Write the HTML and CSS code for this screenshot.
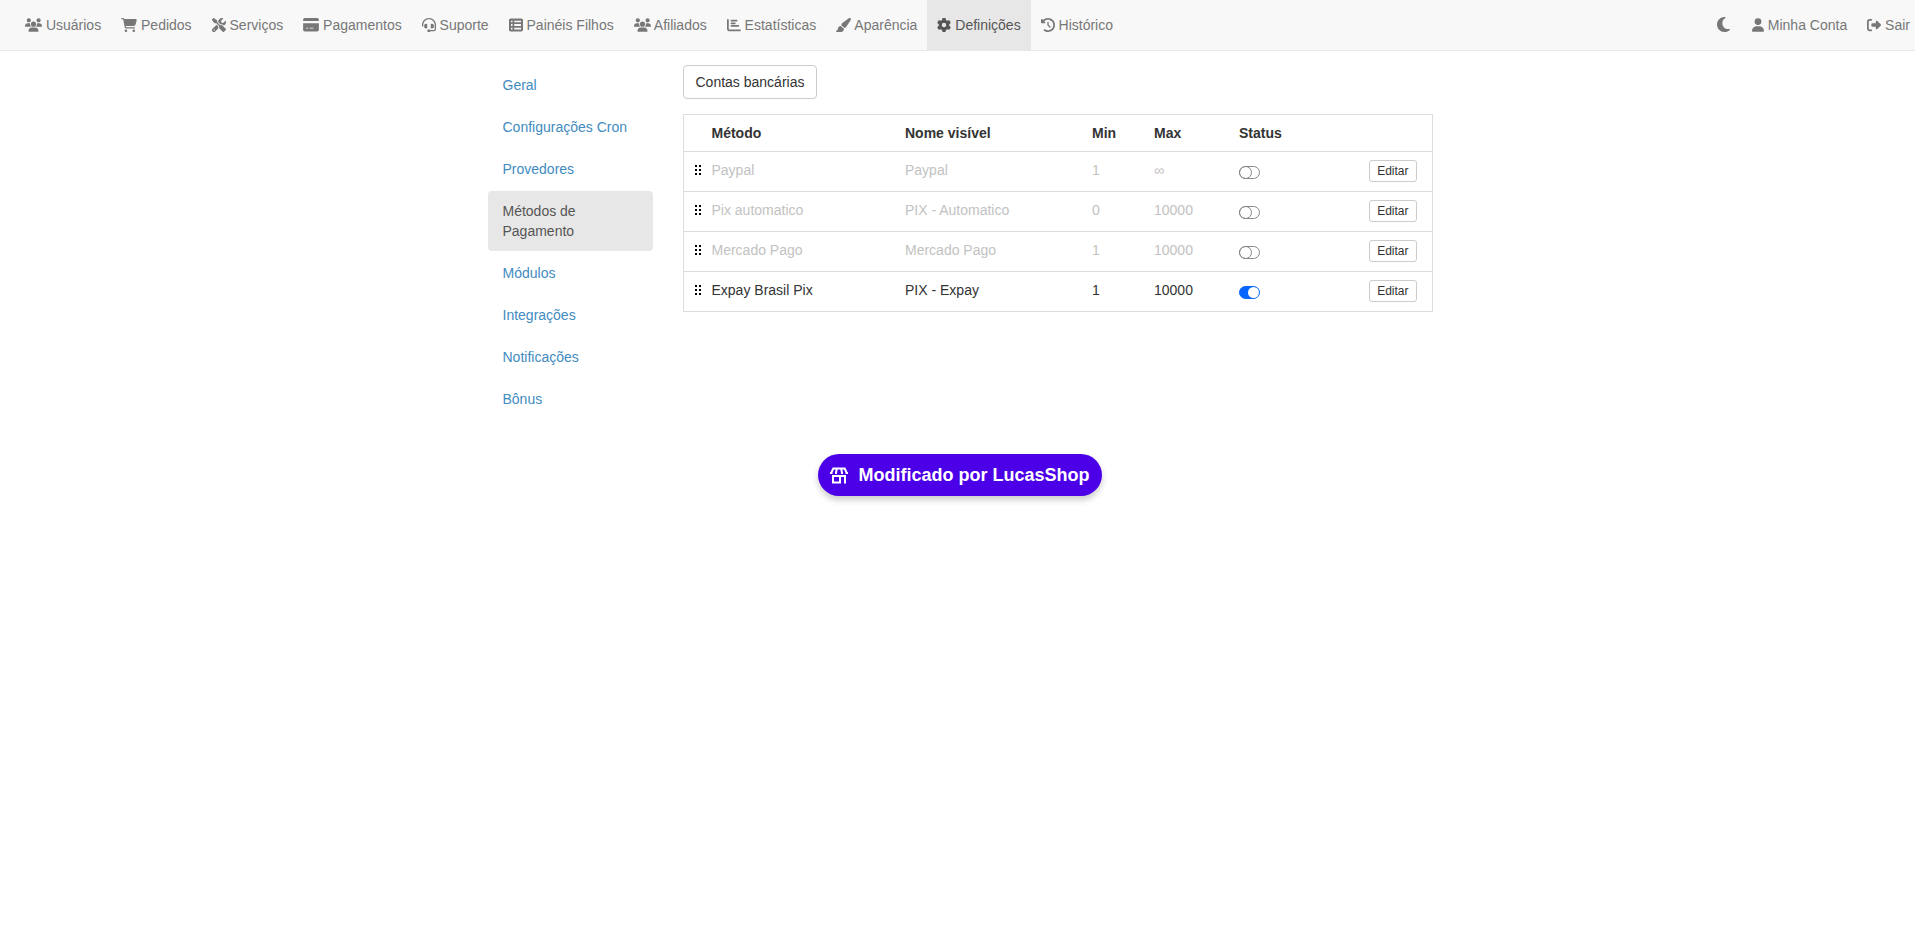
FILE: index.html
```html
<!DOCTYPE html>
<html lang="pt-br">
<head>
    <meta charset="UTF-8">
    <meta name="viewport" content="width=device-width, initial-scale=1.0">
    <title>Métodos de Pagamento</title>
    <link rel="stylesheet" href="styles.css">
</head>
<body>
    <!-- Ícones usados mais de uma vez -->
    <svg class="sprite" aria-hidden="true">
        <symbol id="i-users" viewBox="0 0 640 512"><path d="M144 0a80 80 0 1 1 0 160A80 80 0 1 1 144 0zM512 0a80 80 0 1 1 0 160A80 80 0 1 1 512 0zM0 298.7C0 239.8 47.8 192 106.7 192h42.7c15.9 0 31 3.5 44.6 9.7c-1.3 7.2-1.9 14.7-1.9 22.3c0 38.2 16.8 72.5 43.3 96c-.2 0-.4 0-.7 0H21.3C9.6 320 0 310.4 0 298.7zM405.3 320c-.2 0-.4 0-.7 0c26.6-23.5 43.3-57.8 43.3-96c0-7.6-.7-15-1.9-22.3c13.6-6.3 28.7-9.7 44.6-9.7h42.7C592.2 192 640 239.8 640 298.7c0 11.8-9.6 21.3-21.3 21.3H405.3zM224 224a96 96 0 1 1 192 0 96 96 0 1 1 -192 0zM128 485.3C128 411.7 187.7 352 261.3 352H378.7C452.3 352 512 411.7 512 485.3c0 14.7-11.9 26.7-26.7 26.7H154.7c-14.7 0-26.7-11.9-26.7-26.7z"/></symbol>
        <symbol id="i-drag" viewBox="0 0 6 10"><path d="M0 0h2v2H0zM4 0h2v2H4zM0 4h2v2H0zM4 4h2v2H4zM0 8h2v2H0zM4 8h2v2H4z"/></symbol>
    </svg>

    <nav class="navbar">
        <ul class="nav">
            <li><a href="#"><svg class="icon icon-xl"><use href="#i-users"/></svg> Usuários</a></li>
            <li><a href="#"><svg class="icon icon-lg" viewBox="0 0 576 512"><path d="M0 24C0 10.7 10.7 0 24 0H69.5c22 0 41.5 12.8 50.6 32h411c26.3 0 45.5 25 38.6 50.4l-41 152.3c-8.5 31.4-37 53.3-69.5 53.3H170.7l5.4 28.5c2.2 11.3 12.1 19.5 23.6 19.5H488c13.3 0 24 10.7 24 24s-10.7 24-24 24H199.7c-34.6 0-64.3-24.6-70.7-58.5L77.4 54.5c-.7-3.8-4-6.5-7.9-6.5H24C10.7 48 0 37.3 0 24zM128 464a48 48 0 1 1 96 0 48 48 0 1 1 -96 0zm336-48a48 48 0 1 1 0 96 48 48 0 1 1 0-96z"/></svg> Pedidos</a></li>
            <li><a href="#"><svg class="icon" viewBox="0 0 512 512"><path d="M78.6 5C69.1-2.4 55.6-1.5 47 7L7 47c-8.5 8.5-9.4 22-2.1 31.6l80 104c4.5 5.9 11.6 9.4 19 9.4h54.1l109 109c-14.7 29-10 65.4 14.3 89.6l112 112c12.5 12.5 32.8 12.5 45.3 0l64-64c12.5-12.5 12.5-32.8 0-45.3l-112-112c-24.2-24.2-60.6-29-89.6-14.3l-109-109V104c0-7.5-3.5-14.5-9.4-19L78.6 5zM19.9 396.1C7.2 408.8 0 426.1 0 444.1C0 481.6 30.4 512 67.9 512c18 0 35.3-7.2 48-19.9L233.7 374.3c-7.8-20.9-9-43.6-3.6-65.1l-61.7-61.7L19.9 396.1zM512 144c0-10.5-1.1-20.7-3.2-30.5c-2.4-11.2-16.1-14.1-24.2-6l-63.9 63.9c-3 3-7.1 4.7-11.3 4.7H352c-8.8 0-16-7.2-16-16V102.6c0-4.2 1.7-8.3 4.7-11.3l63.9-63.9c8.1-8.1 5.2-21.8-6-24.2C388.7 1.1 378.5 0 368 0C288.5 0 224 64.5 224 144l0 .8 85.3 85.3c36-9.1 75.8 .5 104 28.7L429 274.5c49-23 83-72.8 83-130.5zM56 432a24 24 0 1 1 48 0 24 24 0 1 1 -48 0z"/></svg> Serviços</a></li>
            <li><a href="#"><svg class="icon icon-lg" viewBox="0 0 576 512"><path d="M64 0C28.700 0 0 28.700 0 64v50H576V64c0-35.300-28.700-64-64-64H64zM576 190H0V430c0 35.300 28.700 64 64 64H512c35.300 0 64-28.700 64-64V190zM112 352h64c8.800 0 16 7.200 16 16s-7.200 16-16 16H112c-8.800 0-16-7.200-16-16s7.200-16 16-16zm112 16c0-8.800 7.200-16 16-16H368c8.800 0 16 7.200 16 16s-7.200 16-16 16H240c-8.800 0-16-7.200-16-16z"/></svg> Pagamentos</a></li>
            <li><a href="#"><svg class="icon" viewBox="0 0 512 512"><path d="M256 48C141.1 48 48 141.1 48 256v40c0 13.3-10.7 24-24 24s-24-10.7-24-24V256C0 114.6 114.6 0 256 0S512 114.6 512 256V400.1c0 48.6-39.4 88-88.1 88L313.6 488c-8.3 14.3-23.8 24-41.6 24H240c-26.5 0-48-21.5-48-48s21.5-48 48-48h32c17.8 0 33.3 9.7 41.6 24l110.4 .1c22.1 0 40-17.9 40-40V256c0-114.9-93.1-208-208-208zM144 208h16c17.7 0 32 14.3 32 32V352c0 17.7-14.3 32-32 32H144c-35.3 0-64-28.7-64-64V272c0-35.3 28.7-64 64-64zm224 0c35.3 0 64 28.7 64 64v48c0 35.3-28.7 64-64 64H352c-17.7 0-32-14.3-32-32V240c0-17.7 14.3-32 32-32h16z"/></svg> Suporte</a></li>
            <li><a href="#"><svg class="icon" viewBox="0 0 512 512"><path fill-rule="evenodd" d="M0 80C0 45 29 16 64 16H448c35 0 64 29 64 64V432c0 35-29 64-64 64H64c-35 0-64-29-64-64V80zm72 16v58h56V96H72zm368 0H192v58H440V96zM72 222v68h56V222H72zm368 0H192v68H440V222zM72 358v58h56V358H72zm368 0H192v58H440V358z"/></svg> Painéis Filhos</a></li>
            <li><a href="#"><svg class="icon icon-xl"><use href="#i-users"/></svg> Afiliados</a></li>
            <li><a href="#"><svg class="icon" viewBox="0 0 512 512"><path d="M32 32c17.7 0 32 14.3 32 32V400c0 8.8 7.2 16 16 16H480c17.7 0 32 14.3 32 32s-14.3 32-32 32H80c-44.2 0-80-35.8-80-80V64C0 46.3 14.3 32 32 32zm96 64c0-17.7 14.3-32 32-32l192 0c17.7 0 32 14.3 32 32s-14.3 32-32 32H160c-17.7 0-32-14.3-32-32zm32 64H288c17.7 0 32 14.3 32 32s-14.3 32-32 32H160c-17.7 0-32-14.3-32-32s14.3-32 32-32zm0 96H416c17.7 0 32 14.3 32 32s-14.3 32-32 32H160c-17.7 0-32-14.3-32-32s14.3-32 32-32z"/></svg> Estatísticas</a></li>
            <li><a href="#"><svg class="icon icon-md" viewBox="32 0 544 512"><path d="M339.3 367.1c27.3-3.9 51.9-19.4 67.2-42.9L568.2 74.1c12.6-19.5 9.4-45.3-7.6-61.2S517.7-4.4 499.1 9.6L262.4 187.2c-24 18-38.2 46.1-38.4 76.1L339.3 367.1zm-19.6 25.4l-116-104.4C143.9 290.3 96 339.6 96 400c0 3.9 .2 7.8 .6 11.6C98.4 429.1 86.4 448 68.8 448H64c-17.7 0-32 14.3-32 32s14.3 32 32 32H208c61.9 0 112-50.1 112-112c0-2.5-.1-5-.2-7.5z"/></svg> Aparência</a></li>
            <li class="active"><a href="#"><svg class="icon" viewBox="0 0 512 512"><path d="M495.9 166.6c3.2 8.7 .5 18.4-6.4 24.6l-43.3 39.4c1.1 8.3 1.7 16.8 1.7 25.4s-.6 17.1-1.7 25.4l43.3 39.4c6.9 6.2 9.6 15.9 6.4 24.6c-4.4 11.9-9.7 23.3-15.8 34.3l-4.7 8.1c-6.6 11-14 21.4-22.1 31.2c-5.9 7.2-15.7 9.6-24.5 6.8l-55.7-17.7c-13.4 10.3-28.2 18.9-44 25.4l-12.5 57.1c-2 9.1-9 16.3-18.2 17.8c-13.8 2.3-28 3.5-42.5 3.5s-28.7-1.2-42.5-3.5c-9.2-1.5-16.2-8.7-18.2-17.8l-12.5-57.1c-15.8-6.5-30.6-15.1-44-25.4L83.1 425.9c-8.8 2.8-18.6 .3-24.5-6.8c-8.1-9.8-15.5-20.2-22.1-31.2l-4.7-8.1c-6.1-11-11.4-22.4-15.8-34.3c-3.2-8.7-.5-18.4 6.4-24.6l43.3-39.4C64.6 273.1 64 264.6 64 256s.6-17.1 1.7-25.4L22.4 191.2c-6.9-6.2-9.6-15.9-6.4-24.6c4.4-11.9 9.7-23.3 15.8-34.3l4.7-8.1c6.6-11 14-21.4 22.1-31.2c5.9-7.2 15.7-9.6 24.5-6.8l55.7 17.7c13.4-10.3 28.2-18.9 44-25.4l12.5-57.1c2-9.1 9-16.3 18.2-17.8C227.3 1.2 241.5 0 256 0s28.7 1.2 42.5 3.5c9.2 1.5 16.2 8.7 18.2 17.8l12.5 57.1c15.8 6.5 30.6 15.1 44 25.4l55.7-17.7c8.8-2.8 18.6-.3 24.5 6.8c8.1 9.8 15.5 20.2 22.1 31.2l4.7 8.1c6.1 11 11.4 22.4 15.8 34.3zM256 336a80 80 0 1 0 0-160 80 80 0 1 0 0 160z"/></svg> Definições</a></li>
            <li><a href="#"><svg class="icon" viewBox="0 0 512 512"><path d="M75 75L41 41C25.9 25.9 0 36.6 0 57.9V168c0 13.3 10.7 24 24 24H134.1c21.4 0 32.1-25.9 17-41l-30.8-30.8C155 85.5 203 64 256 64c106 0 192 86 192 192s-86 192-192 192c-40.8 0-78.6-12.7-109.7-34.4c-14.5-10.1-34.4-6.6-44.6 7.9s-6.6 34.4 7.9 44.6C151.2 495 201.7 512 256 512c141.4 0 256-114.6 256-256S397.4 0 256 0C185.3 0 121.3 28.7 75 75zm181 53c-13.3 0-24 10.7-24 24V256c0 6.4 2.5 12.5 7 17l72 72c9.4 9.4 24.6 9.4 33.9 0s9.4-24.6 0-33.9l-65-65V152c0-13.3-10.7-24-24-24z"/></svg> Histórico</a></li>
        </ul>
        <ul class="nav nav-right">
            <li><a href="#" aria-label="Modo escuro"><svg class="icon icon-moon" viewBox="0 32 384 448" preserveAspectRatio="xMinYMid"><path d="M223.5 32C100 32 0 132.3 0 256S100 480 223.5 480c60.6 0 115.5-24.2 155.8-63.4c5-4.9 6.3-12.5 3.1-18.7s-10.1-9.7-17-8.5c-9.8 1.7-19.8 2.6-30.1 2.6c-96.9 0-175.5-78.8-175.5-176c0-65.8 36-123.1 89.3-153.3c6.1-3.5 9.2-10.5 7.7-17.3s-7.3-11.9-14.3-12.5c-6.3-.5-12.6-.8-19-.8z"/></svg></a></li>
            <li><a href="#"><svg class="icon icon-sm" viewBox="0 0 448 512"><path d="M224 256A128 128 0 1 0 224 0a128 128 0 1 0 0 256zm-45.7 48C79.8 304 0 383.8 0 482.3C0 498.7 13.3 512 29.7 512H418.3c16.4 0 29.7-13.3 29.7-29.7C448 383.8 368.2 304 269.7 304H178.3z"/></svg> Minha Conta</a></li>
            <li><a href="#"><svg class="icon" viewBox="0 0 512 512"><path d="M377.9 105.9L500.7 228.7c7.2 7.2 11.3 17.1 11.3 27.3s-4.1 20.1-11.3 27.3L377.9 406.1c-6.4 6.4-15 9.9-24 9.9c-18.7 0-33.9-15.2-33.9-33.9l0-62.1-128 0c-17.7 0-32-14.3-32-32l0-64c0-17.7 14.3-32 32-32l128 0 0-62.1c0-18.7 15.2-33.9 33.9-33.9c9 0 17.6 3.6 24 9.9zM160 96L96 96c-17.7 0-32 14.3-32 32l0 256c0 17.7 14.3 32 32 32l64 0c17.7 0 32 14.3 32 32s-14.3 32-32 32l-64 0c-53 0-96-43-96-96L0 128C0 75 43 32 96 32l64 0c17.7 0 32 14.3 32 32s-14.3 32-32 32z"/></svg> Sair</a></li>
        </ul>
    </nav>

    <main class="container">
        <ul class="pills">
            <li><a href="#">Geral</a></li>
            <li><a href="#">Configurações Cron</a></li>
            <li><a href="#">Provedores</a></li>
            <li class="active"><a href="#">Métodos de Pagamento</a></li>
            <li><a href="#">Módulos</a></li>
            <li><a href="#">Integrações</a></li>
            <li><a href="#">Notificações</a></li>
            <li><a href="#">Bônus</a></li>
        </ul>

        <section class="content">
            <button type="button" class="btn">Contas bancárias</button>

            <table class="table">
                <colgroup>
                    <col class="col-metodo">
                    <col class="col-nome">
                    <col class="col-min">
                    <col class="col-max">
                    <col class="col-status">
                    <col>
                </colgroup>
                <thead>
                    <tr>
                        <th class="metodo">Método</th>
                        <th>Nome visível</th>
                        <th>Min</th>
                        <th>Max</th>
                        <th>Status</th>
                        <th></th>
                    </tr>
                </thead>
                <tbody>
                    <tr class="inativo">
                        <td class="metodo"><svg class="drag"><use href="#i-drag"/></svg>Paypal</td>
                        <td>Paypal</td>
                        <td>1</td>
                        <td>∞</td>
                        <td><input type="checkbox" class="switch" aria-label="Paypal"></td>
                        <td class="acao"><button type="button" class="btn btn-xs">Editar</button></td>
                    </tr>
                    <tr class="inativo">
                        <td class="metodo"><svg class="drag"><use href="#i-drag"/></svg>Pix automatico</td>
                        <td>PIX - Automatico</td>
                        <td>0</td>
                        <td>10000</td>
                        <td><input type="checkbox" class="switch" aria-label="Pix automatico"></td>
                        <td class="acao"><button type="button" class="btn btn-xs">Editar</button></td>
                    </tr>
                    <tr class="inativo">
                        <td class="metodo"><svg class="drag"><use href="#i-drag"/></svg>Mercado Pago</td>
                        <td>Mercado Pago</td>
                        <td>1</td>
                        <td>10000</td>
                        <td><input type="checkbox" class="switch" aria-label="Mercado Pago"></td>
                        <td class="acao"><button type="button" class="btn btn-xs">Editar</button></td>
                    </tr>
                    <tr>
                        <td class="metodo"><svg class="drag"><use href="#i-drag"/></svg>Expay Brasil Pix</td>
                        <td>PIX - Expay</td>
                        <td>1</td>
                        <td>10000</td>
                        <td><input type="checkbox" class="switch" aria-label="Expay Brasil Pix" checked></td>
                        <td class="acao"><button type="button" class="btn btn-xs">Editar</button></td>
                    </tr>
                </tbody>
            </table>
        </section>
    </main>

    <footer class="rodape">
        <a href="#" class="selo">
            <svg class="loja" viewBox="0 0 18 17"><path fill="none" stroke="currentColor" stroke-width="2" d="M1 6.500L3.300 1.500h11.400L17 6.500M6.800 1.500L6 6M11.200 1.500L12 6M0 6h2.500M5 6h2M11 6h2M15.500 6H18M2 9h14M3 8v7.500h7V9M15 9v7.500"/></svg>
            Modificado por LucasShop
        </a>
    </footer>
</body>
</html>
```
FILE: styles.css
```css
:root {
    --link: #428bbf;
    --borda: #ddd;
    --ativo: #e7e7e7;
}

* {
    box-sizing: border-box;
}

body {
    margin: 0;
    font-family: "Liberation Sans", Arial, sans-serif;
    font-size: 14px;
    line-height: 20px;
    color: #333;
    background: #fff;
}

ul {
    margin: 0;
    padding: 0;
    list-style: none;
}

a {
    text-decoration: none;
}

.sprite {
    display: none;
}

/* Barra superior */
.navbar {
    display: flex;
    justify-content: space-between;
    margin-bottom: 14px;
    padding-left: 15px;
    background: #f8f8f8;
    border-bottom: 1px solid var(--ativo);
}

.nav {
    display: flex;
}

.nav a {
    display: block;
    padding: 15px 10px;
    color: #777;
    white-space: nowrap;
}

.nav-right li:last-child a {
    padding-right: 5px;
}

.nav .active a {
    color: #555;
    background: var(--ativo);
}

.icon {
    width: 14px;
    height: 14px;
    fill: currentColor;
    vertical-align: -2px;
}

.icon-sm {
    width: 12px;
}

.icon-md {
    width: 15px;
}

.icon-lg {
    width: 16px;
}

.icon-xl {
    width: 17px;
}

.icon-moon {
    width: 15px;
    height: 15px;
}

/* Conteúdo */
.container {
    display: grid;
    grid-template-columns: 165px 1fr;
    gap: 30px;
    max-width: 950px;
    margin: 0 auto;
    padding-left: 5px;
}

.pills li + li {
    margin-top: 2px;
}

.pills a {
    display: block;
    padding: 10px 15px;
    color: var(--link);
    border-radius: 4px;
}

.pills .active a {
    color: #555;
    background: var(--ativo);
}

.btn {
    padding: 6px 12px;
    font: inherit;
    color: #333;
    background: #fff;
    border: 1px solid #ccc;
    border-radius: 4px;
    cursor: pointer;
}

.btn-xs {
    padding: 1px 7px;
    font-size: 12px;
    line-height: 18px;
    border-radius: 3px;
}

.table {
    width: 100%;
    margin-top: 15px;
    table-layout: fixed;
    border: 1px solid var(--borda);
    border-collapse: collapse;
}

.table th,
.table td {
    padding: 8px;
    text-align: left;
    vertical-align: top;
    border-top: 1px solid var(--borda);
}

.table td {
    height: 40px;
}

.col-metodo {
    width: 214px;
}

.col-nome {
    width: 187px;
}

.col-min {
    width: 62px;
}

.col-max {
    width: 85px;
}

.col-status {
    width: 100px;
}

.table .metodo {
    padding-left: 28px;
}

.table .acao {
    padding-right: 15px;
    text-align: right;
}

.inativo {
    color: #c2c2c2;
}

/* Alça de arrastar, antes do nome */
.drag {
    width: 6px;
    height: 10px;
    margin: 0 11px 0 -17px;
    fill: #000;
}

.switch {
    appearance: none;
    display: flex;
    width: 21px;
    height: 13px;
    margin: 6px 0 0;
    border: 1px solid #888;
    border-radius: 7px;
}

.switch::before {
    content: "";
    box-sizing: border-box;
    flex: none;
    width: 13px;
    height: 13px;
    margin: -1px;
    border: 1px solid #888;
    border-radius: 50%;
}

.switch:checked {
    background: #0866ff;
    border-color: #0866ff;
}

.switch:checked::before {
    width: 11px;
    height: 11px;
    margin: 0 0 0 8px;
    background: #fff;
    border: 0;
}

/* Selo */
.rodape {
    margin: 35px 0;
    padding-left: 5px;
    text-align: center;
}

.selo {
    display: inline-flex;
    align-items: center;
    gap: 10px;
    padding: 10px 12px;
    font-size: 18px;
    line-height: 22px;
    font-weight: bold;
    color: #fff;
    background: #4b00e8;
    border-radius: 21px;
    box-shadow: 0 4px 6px rgba(0, 0, 0, .2);
}

.loja {
    width: 18px;
    height: 17px;
}
```
